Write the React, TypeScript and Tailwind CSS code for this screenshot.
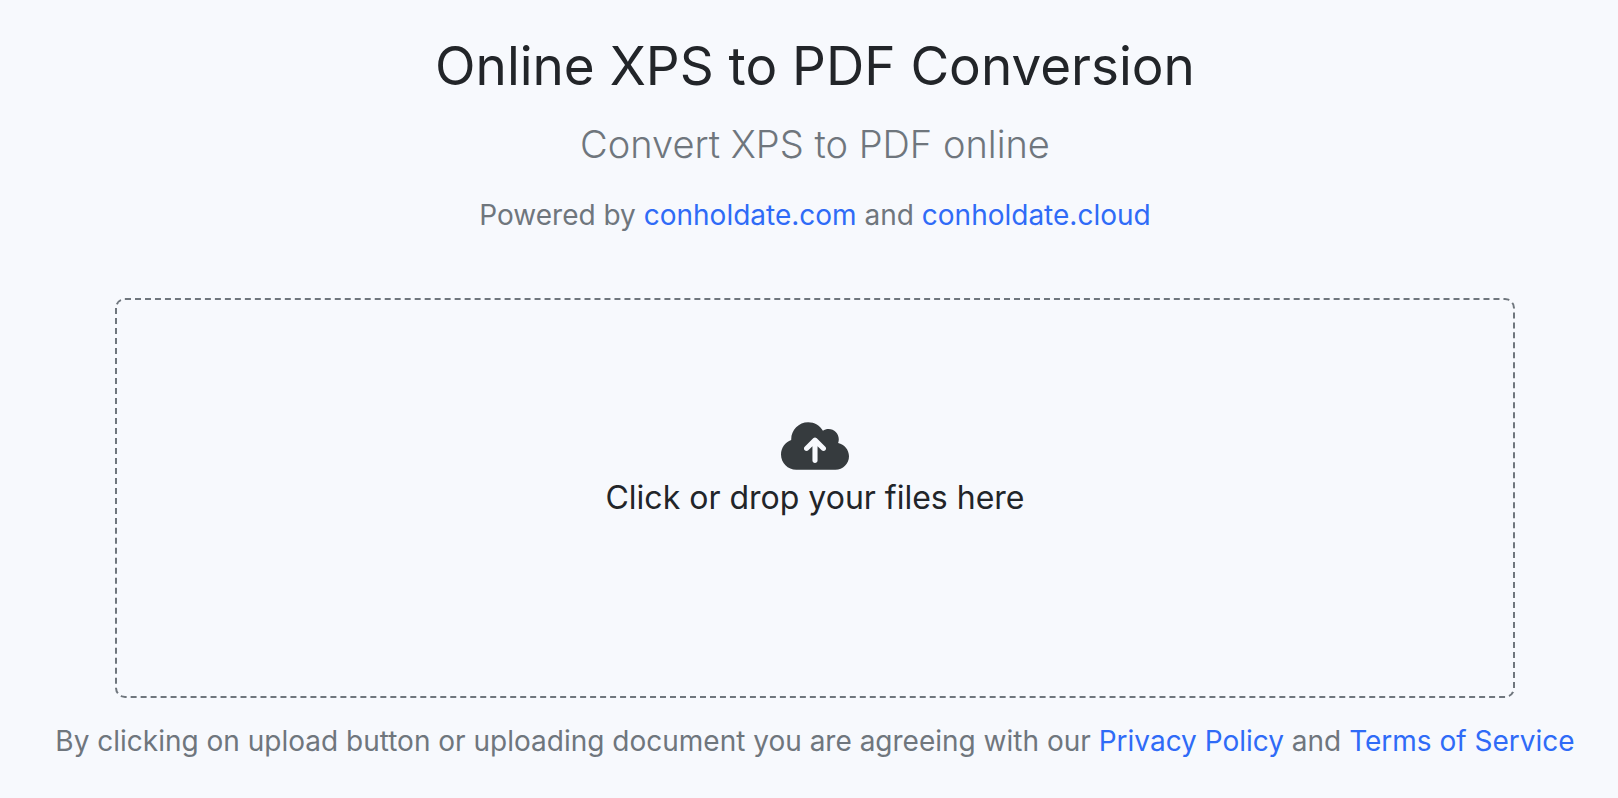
import { FaCloudArrowUp } from "react-icons/fa6";

const linkStyle = "text-[#2f6bf7] hover:underline";

const DropZone = () => (
  <label
    htmlFor="files"
    className="mt-[62px] flex h-[400px] w-full cursor-pointer flex-col items-center justify-center rounded-[10px] border-2 border-dashed border-[#6f767d] px-4 pb-14 text-center text-[32px] leading-[48px] text-[#222529]"
  >
    <FaCloudArrowUp className="h-14 w-[68px] text-[#363b3e]" />
    Click or drop your files here
    <input id="files" type="file" multiple className="sr-only" />
  </label>
);

const App = () => (
  <main className="min-h-screen bg-[#f7f9fd] pt-9 pr-[42px] pb-6 pl-[54px] text-center font-['Inter',sans-serif] text-[28px] leading-[42px] text-[#6f767d]">
    <div className="mx-auto w-[92%]">
      <h1 className="text-[53px] leading-[60px] text-[#222529]">Online XPS to PDF Conversion</h1>
      <h2 className="mt-[18px] text-[38px] leading-[60px] font-light">Convert XPS to PDF online</h2>
      <p className="mt-5">
        Powered by <a href="#" className={linkStyle}>conholdate.com</a> and{" "}
        <a href="#" className={linkStyle}>conholdate.cloud</a>
      </p>
      <DropZone />
    </div>
    <p className="mt-[22px]">
      By clicking on upload button or uploading document you are agreeing with our{" "}
      <a href="#" className={linkStyle}>Privacy Policy</a> and{" "}
      <a href="#" className={linkStyle}>Terms of Service</a>
    </p>
  </main>
);

export default App;
